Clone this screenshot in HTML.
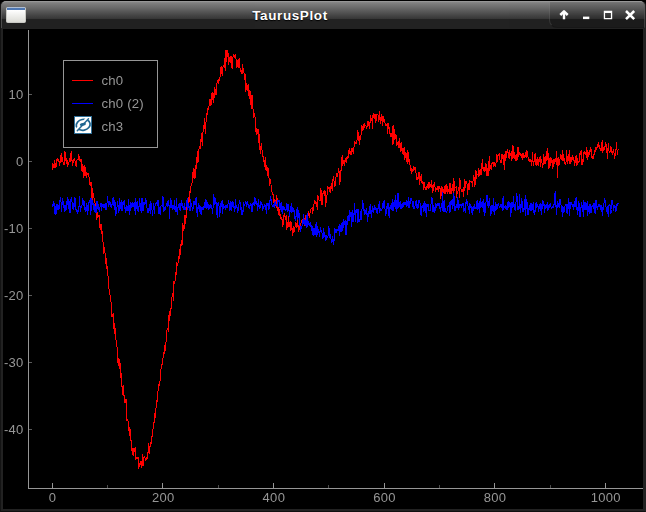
<!DOCTYPE html>
<html>
<head>
<meta charset="utf-8">
<title>TaurusPlot</title>
<style>
html,body{margin:0;padding:0;background:#000;}
body{width:646px;height:512px;overflow:hidden;position:relative;font-family:"Liberation Sans",sans-serif;}
#win{position:absolute;left:0;top:0;width:646px;height:512px;background:#000;}
#frame{position:absolute;left:0;top:0;width:644px;height:510px;border:1px solid #000;border-color:#000 #222 #101010 #141414;border-radius:6px 6px 0 0;background:#222;overflow:hidden;}
#tb{position:absolute;left:0;top:0;width:644px;height:28px;background:linear-gradient(to bottom,#8e8e8e 0px,#7b7b7b 3px,#353535 18px,#222 18.5px,#222 28px);}
#tbhl{position:absolute;left:0;top:0;width:642px;height:26px;border-top:1px solid #a0a0a0;border-left:1px solid #6a6a6a;border-right:1px solid #6a6a6a;border-radius:5px 5px 0 0;opacity:.6}
#content{position:absolute;left:2px;top:28px;width:640px;height:480px;background:#000;}
#title{position:absolute;left:0;top:7px;width:578px;text-align:center;color:#fff;font-weight:bold;font-size:13.5px;letter-spacing:0.6px;line-height:16px;text-shadow:0 1px 1px #000;}
#btns{position:absolute;left:548px;top:1px;width:96px;height:25px;border-left:1px solid rgba(255,255,255,.12);border-bottom:1px solid rgba(0,0,0,.2);border-radius:0 0 0 8px;background:linear-gradient(to bottom,rgba(0,0,0,.12),rgba(0,0,0,.18));}
svg{position:absolute;left:0;top:0;}
.t{font-family:"Liberation Sans",sans-serif;font-size:13px;fill:#969696;}
.lg{font-size:13.2px;letter-spacing:0.2px;}
.tk{letter-spacing:0.3px;}
svg{will-change:transform;}
</style>
</head>
<body>
<div id="win">
 <div id="frame">
  <div id="tb"></div>
  <div id="tbhl"></div>
  <div id="btns"></div>
  <div id="title">TaurusPlot</div>
  <div id="content"></div>
 </div>
 <svg width="646" height="512" viewBox="0 0 646 512">
  <!-- window icon -->
  <g>
   <rect x="6.5" y="7.5" width="19" height="15" rx="1" fill="#f2f2ee" stroke="#c9c9c4"/>
   <rect x="7" y="10" width="18" height="12" fill="url(#ig)"/>
   <rect x="7" y="7.2" width="18" height="1" fill="#a9bbd6"/>
   <rect x="7" y="8" width="18" height="2" fill="#4f78b3"/>
  </g>
  <defs>
   <linearGradient id="ig" x1="0" y1="0" x2="0" y2="1"><stop offset="0" stop-color="#ffffff"/><stop offset="1" stop-color="#dcdcd6"/></linearGradient>
  </defs>
  <!-- title buttons -->
  <g fill="#fff" stroke="none">
   <path d="M560.3 15 L564 11.3 L567.7 15" fill="none" stroke="#fff" stroke-width="2.5" stroke-linejoin="round"/>
   <rect x="562.8" y="12.5" width="2.4" height="6.8"/>
   <rect x="583" y="16.6" width="6.3" height="2.5"/>
   <path d="M603.8 10.8 H612.2 V19.2 H603.8 Z M605.1 13 V17.9 H610.9 V13 Z" fill-rule="evenodd"/>
   <path d="M626 11 L634.2 19.2 M634.2 11 L626 19.2" fill="none" stroke="#fff" stroke-width="2.5"/>
  </g>
  <!-- axes -->
  <g shape-rendering="crispEdges" fill="#969696">
   <rect x="28" y="30" width="1" height="459"/>
   <rect x="28" y="488" width="615" height="1"/>
  </g>
  <!-- x ticks -->
  <g shape-rendering="crispEdges">
   <rect x="52" y="483" width="1" height="5" fill="#969696"/>
   <rect x="107" y="485" width="1" height="3" fill="#4b4b4b"/>
   <rect x="162" y="483" width="1" height="5" fill="#969696"/>
   <rect x="218" y="485" width="1" height="3" fill="#4b4b4b"/>
   <rect x="273" y="483" width="1" height="5" fill="#969696"/>
   <rect x="328" y="485" width="1" height="3" fill="#4b4b4b"/>
   <rect x="384" y="483" width="1" height="5" fill="#969696"/>
   <rect x="439" y="485" width="1" height="3" fill="#4b4b4b"/>
   <rect x="494" y="483" width="1" height="5" fill="#969696"/>
   <rect x="550" y="485" width="1" height="3" fill="#4b4b4b"/>
   <rect x="605" y="483" width="1" height="5" fill="#969696"/>
  </g>
  <g shape-rendering="crispEdges">
   <rect x="29" y="94" width="3" height="1" fill="#5a5a5a"/>
   <rect x="29" y="161" width="3" height="1" fill="#5a5a5a"/>
   <rect x="29" y="228" width="3" height="1" fill="#5a5a5a"/>
   <rect x="29" y="295" width="3" height="1" fill="#5a5a5a"/>
   <rect x="29" y="362" width="3" height="1" fill="#5a5a5a"/>
   <rect x="29" y="429" width="3" height="1" fill="#5a5a5a"/>
  </g>
  <g class="t tk" text-anchor="middle">
   <text x="52.6" y="502">0</text>
   <text x="163.3" y="502">200</text>
   <text x="273.9" y="502">400</text>
   <text x="384.5" y="502">600</text>
   <text x="495.1" y="502">800</text>
   <text x="605.8" y="502">1000</text>
  </g>
  <g class="t tk" text-anchor="end">
   <text x="23.6" y="98.7">10</text>
   <text x="23.6" y="165.7">0</text>
   <text x="23.6" y="232.7">-10</text>
   <text x="23.6" y="299.7">-20</text>
   <text x="23.6" y="366.7">-30</text>
   <text x="23.6" y="433.7">-40</text>
  </g>
  <!-- curves -->
  <path d="M52.3,170.2 L52.9,162.9 L53.4,167.6 L54.0,167.9 L54.5,160.4 L55.1,163.3 L55.6,168.4 L56.2,166.6 L56.7,159.8 L57.3,160.0 L57.8,157.7 L58.4,162.2 L58.9,159.3 L59.5,165.7 L60.0,163.2 L60.6,161.2 L61.1,153.5 L61.7,161.5 L62.3,156.8 L62.8,160.7 L63.4,164.6 L63.9,163.2 L64.5,165.3 L65.0,151.4 L65.6,160.8 L66.1,159.7 L66.7,157.8 L67.2,166.8 L67.8,160.3 L68.3,164.6 L68.9,162.4 L69.4,159.4 L70.0,160.6 L70.6,161.6 L71.1,151.3 L71.7,160.4 L72.2,160.2 L72.8,165.8 L73.3,159.0 L73.9,160.4 L74.4,159.0 L75.0,160.8 L75.5,163.6 L76.1,166.6 L76.6,162.5 L77.2,159.4 L77.7,159.8 L78.3,159.3 L78.8,153.9 L79.4,159.7 L80.0,160.8 L80.5,161.2 L81.1,158.9 L81.6,167.2 L82.2,172.4 L82.7,164.3 L83.3,167.9 L83.8,177.7 L84.4,172.0 L84.9,165.3 L85.5,176.1 L86.0,171.7 L86.6,177.6 L87.1,172.7 L87.7,174.6 L88.3,175.4 L88.8,173.4 L89.4,184.2 L89.9,183.4 L90.5,184.5 L91.0,181.8 L91.6,189.0 L92.1,200.9 L92.7,188.1 L93.2,195.7 L93.8,195.7 L94.3,201.6 L94.9,202.5 L95.4,206.1 L96.0,208.9 L96.5,219.5 L97.1,217.6 L97.7,212.0 L98.2,216.8 L98.8,216.5 L99.3,215.8 L99.9,227.9 L100.4,228.7 L101.0,223.9 L101.5,233.1 L102.1,232.6 L102.6,230.9 L103.2,246.2 L103.7,252.5 L104.3,251.2 L104.8,247.3 L105.4,263.8 L106.0,257.3 L106.5,268.5 L107.1,267.1 L107.6,270.4 L108.2,277.9 L108.7,286.2 L109.3,291.3 L109.8,292.6 L110.4,300.3 L110.9,300.6 L111.5,306.8 L112.0,316.4 L112.6,316.5 L113.1,313.0 L113.7,318.6 L114.2,334.0 L114.8,323.2 L115.4,336.6 L115.9,338.5 L116.5,345.2 L117.0,347.0 L117.6,347.9 L118.1,366.1 L118.7,358.4 L119.2,359.5 L119.8,368.5 L120.3,362.7 L120.9,377.9 L121.4,373.1 L122.0,386.6 L122.5,394.9 L123.1,384.6 L123.6,392.8 L124.2,396.7 L124.8,402.6 L125.3,402.3 L125.9,398.9 L126.4,400.5 L127.0,421.1 L127.5,420.0 L128.1,420.8 L128.6,430.6 L129.2,429.3 L129.7,436.1 L130.3,428.6 L130.8,437.3 L131.4,446.2 L131.9,451.3 L132.5,447.9 L133.1,456.2 L133.6,448.3 L134.2,451.5 L134.7,448.9 L135.3,448.3 L135.8,460.1 L136.4,457.2 L136.9,457.8 L137.5,458.1 L138.0,457.2 L138.6,469.3 L139.1,464.2 L139.7,466.5 L140.2,461.0 L140.8,462.6 L141.3,467.9 L141.9,462.6 L142.5,453.8 L143.0,466.0 L143.6,460.3 L144.1,456.6 L144.7,456.8 L145.2,458.7 L145.8,460.5 L146.3,457.1 L146.9,460.4 L147.4,452.7 L148.0,453.7 L148.5,443.5 L149.1,453.3 L149.6,452.5 L150.2,443.9 L150.8,441.8 L151.3,444.1 L151.9,437.9 L152.4,432.2 L153.0,429.3 L153.5,427.4 L154.1,421.6 L154.6,412.6 L155.2,417.2 L155.7,416.7 L156.3,400.3 L156.8,406.3 L157.4,394.5 L157.9,391.4 L158.5,388.9 L159.0,384.4 L159.6,385.9 L160.2,378.3 L160.7,373.9 L161.3,364.0 L161.8,366.0 L162.4,362.3 L162.9,360.0 L163.5,351.8 L164.0,353.8 L164.6,344.8 L165.1,350.6 L165.7,349.9 L166.2,337.1 L166.8,331.0 L167.3,329.0 L167.9,328.1 L168.5,331.9 L169.0,315.3 L169.6,321.2 L170.1,308.3 L170.7,315.5 L171.2,305.6 L171.8,298.9 L172.3,294.0 L172.9,293.2 L173.4,300.6 L174.0,281.2 L174.5,282.5 L175.1,280.9 L175.6,272.3 L176.2,274.9 L176.7,261.9 L177.3,265.5 L177.9,265.2 L178.4,255.8 L179.0,257.6 L179.5,259.4 L180.1,246.6 L180.6,255.1 L181.2,240.0 L181.7,245.1 L182.3,244.5 L182.8,222.6 L183.4,230.1 L183.9,230.9 L184.5,219.8 L185.0,215.1 L185.6,223.9 L186.2,216.0 L186.7,212.0 L187.3,198.2 L187.8,203.2 L188.4,197.0 L188.9,203.0 L189.5,198.8 L190.0,191.0 L190.6,191.9 L191.1,185.1 L191.7,184.9 L192.2,182.2 L192.8,171.9 L193.3,178.0 L193.9,168.3 L194.4,171.1 L195.0,178.5 L195.6,166.2 L196.1,167.2 L196.7,157.1 L197.2,162.7 L197.8,150.7 L198.3,161.8 L198.9,149.5 L199.4,145.7 L200.0,149.0 L200.5,146.2 L201.1,137.4 L201.6,132.6 L202.2,146.2 L202.7,135.6 L203.3,128.3 L203.8,128.9 L204.4,117.8 L205.0,128.6 L205.5,133.6 L206.1,119.6 L206.6,113.3 L207.2,115.2 L207.7,109.8 L208.3,106.6 L208.8,110.0 L209.4,99.2 L209.9,101.7 L210.5,100.5 L211.0,105.5 L211.6,94.2 L212.1,93.5 L212.7,100.2 L213.3,93.3 L213.8,103.3 L214.4,87.2 L214.9,87.6 L215.5,94.7 L216.0,94.8 L216.6,89.4 L217.1,81.1 L217.7,82.2 L218.2,78.6 L218.8,83.9 L219.3,77.5 L219.9,79.5 L220.4,67.2 L221.0,74.3 L221.5,66.3 L222.1,75.8 L222.7,68.8 L223.2,65.4 L223.8,66.2 L224.3,68.3 L224.9,57.7 L225.4,71.0 L226.0,49.7 L226.5,61.8 L227.1,55.5 L227.6,49.7 L228.2,54.7 L228.7,65.3 L229.3,58.2 L229.8,57.1 L230.4,63.0 L231.0,55.8 L231.5,62.3 L232.1,69.1 L232.6,64.5 L233.2,53.6 L233.7,57.4 L234.3,55.1 L234.8,58.4 L235.4,54.0 L235.9,57.1 L236.5,68.4 L237.0,66.8 L237.6,61.6 L238.1,59.5 L238.7,67.9 L239.2,58.4 L239.8,67.2 L240.4,68.8 L240.9,71.5 L241.5,70.7 L242.0,74.3 L242.6,64.3 L243.1,72.3 L243.7,67.7 L244.2,76.2 L244.8,79.9 L245.3,74.0 L245.9,91.9 L246.4,83.2 L247.0,86.9 L247.5,90.6 L248.1,83.6 L248.7,91.1 L249.2,99.2 L249.8,89.8 L250.3,91.9 L250.9,104.5 L251.4,108.6 L252.0,95.1 L252.5,107.9 L253.1,109.4 L253.6,117.7 L254.2,114.7 L254.7,113.3 L255.3,120.1 L255.8,131.9 L256.4,128.0 L256.9,135.2 L257.5,131.2 L258.1,128.6 L258.6,143.1 L259.2,134.2 L259.7,145.1 L260.3,153.5 L260.8,146.2 L261.4,144.7 L261.9,148.1 L262.5,156.1 L263.0,156.3 L263.6,160.4 L264.1,162.1 L264.7,166.6 L265.2,156.8 L265.8,168.7 L266.3,170.6 L266.9,165.2 L267.5,175.5 L268.0,172.6 L268.6,168.0 L269.1,179.8 L269.7,186.3 L270.2,179.8 L270.8,180.9 L271.3,189.2 L271.9,191.1 L272.4,194.5 L273.0,193.9 L273.5,194.1 L274.1,204.1 L274.6,198.9 L275.2,201.1 L275.8,205.6 L276.3,207.5 L276.9,194.9 L277.4,210.7 L278.0,206.7 L278.5,207.7 L279.1,216.2 L279.6,209.3 L280.2,219.3 L280.7,213.9 L281.3,220.2 L281.8,218.7 L282.4,221.1 L282.9,227.2 L283.5,215.4 L284.0,217.2 L284.6,213.4 L285.2,217.0 L285.7,219.8 L286.3,215.2 L286.8,228.0 L287.4,226.9 L287.9,223.6 L288.5,216.0 L289.0,226.6 L289.6,226.0 L290.1,221.1 L290.7,229.9 L291.2,229.7 L291.8,222.1 L292.3,236.4 L292.9,234.0 L293.5,227.1 L294.0,227.6 L294.6,232.4 L295.1,226.3 L295.7,221.7 L296.2,228.0 L296.8,225.7 L297.3,218.5 L297.9,225.5 L298.4,231.9 L299.0,225.3 L299.5,230.1 L300.1,226.7 L300.6,226.9 L301.2,220.7 L301.7,221.6 L302.3,220.3 L302.9,224.4 L303.4,223.5 L304.0,217.9 L304.5,225.6 L305.1,219.1 L305.6,215.1 L306.2,218.4 L306.7,220.5 L307.3,213.1 L307.8,215.9 L308.4,210.6 L308.9,215.4 L309.5,218.0 L310.0,212.8 L310.6,210.7 L311.2,208.7 L311.7,209.0 L312.3,207.4 L312.8,213.7 L313.4,206.8 L313.9,204.6 L314.5,199.7 L315.0,202.6 L315.6,201.8 L316.1,204.1 L316.7,203.0 L317.2,209.5 L317.8,195.1 L318.3,196.9 L318.9,199.7 L319.4,200.9 L320.0,201.0 L320.6,187.8 L321.1,191.1 L321.7,204.6 L322.2,204.2 L322.8,195.4 L323.3,190.9 L323.9,193.7 L324.4,196.4 L325.0,190.0 L325.5,207.1 L326.1,202.4 L326.6,197.9 L327.2,193.3 L327.7,185.9 L328.3,188.5 L328.9,188.2 L329.4,191.8 L330.0,186.8 L330.5,192.9 L331.1,185.1 L331.6,182.7 L332.2,191.4 L332.7,181.9 L333.3,176.2 L333.8,177.6 L334.4,186.7 L334.9,181.6 L335.5,185.7 L336.0,177.2 L336.6,173.5 L337.1,173.2 L337.7,177.1 L338.3,168.4 L338.8,169.6 L339.4,173.0 L339.9,184.6 L340.5,171.1 L341.0,170.3 L341.6,170.4 L342.1,154.8 L342.7,166.0 L343.2,162.7 L343.8,160.5 L344.3,165.5 L344.9,160.5 L345.4,160.9 L346.0,157.9 L346.5,163.0 L347.1,155.8 L347.7,158.2 L348.2,157.4 L348.8,150.5 L349.3,149.7 L349.9,153.2 L350.4,152.4 L351.0,155.4 L351.5,150.5 L352.1,148.2 L352.6,148.6 L353.2,153.6 L353.7,150.1 L354.3,143.6 L354.8,141.5 L355.4,144.3 L356.0,142.2 L356.5,142.9 L357.1,139.6 L357.6,130.4 L358.2,140.9 L358.7,132.1 L359.3,145.0 L359.8,136.2 L360.4,140.0 L360.9,137.9 L361.5,124.7 L362.0,128.8 L362.6,131.4 L363.1,124.4 L363.7,129.5 L364.2,126.5 L364.8,123.9 L365.4,125.9 L365.9,125.5 L366.5,127.7 L367.0,126.9 L367.6,123.4 L368.1,120.6 L368.7,124.7 L369.2,123.5 L369.8,128.6 L370.3,114.8 L370.9,122.1 L371.4,119.0 L372.0,120.1 L372.5,129.3 L373.1,112.7 L373.7,117.7 L374.2,114.2 L374.8,118.8 L375.3,113.8 L375.9,122.7 L376.4,115.3 L377.0,113.8 L377.5,114.3 L378.1,114.9 L378.6,121.7 L379.2,118.5 L379.7,110.8 L380.3,123.0 L380.8,122.0 L381.4,118.4 L381.9,114.2 L382.5,126.2 L383.1,115.8 L383.6,118.9 L384.2,123.0 L384.7,118.9 L385.3,126.2 L385.8,123.3 L386.4,126.3 L386.9,124.2 L387.5,134.4 L388.0,122.9 L388.6,129.4 L389.1,126.9 L389.7,128.6 L390.2,136.5 L390.8,133.3 L391.4,135.7 L391.9,134.2 L392.5,126.5 L393.0,144.5 L393.6,124.9 L394.1,130.0 L394.7,139.6 L395.2,138.5 L395.8,133.6 L396.3,136.9 L396.9,146.2 L397.4,142.1 L398.0,142.4 L398.5,147.6 L399.1,139.8 L399.6,138.3 L400.2,152.0 L400.8,143.7 L401.3,142.2 L401.9,149.9 L402.4,149.0 L403.0,154.3 L403.5,154.7 L404.1,147.5 L404.6,160.0 L405.2,151.8 L405.7,157.7 L406.3,152.6 L406.8,160.4 L407.4,163.8 L407.9,150.0 L408.5,162.1 L409.0,158.7 L409.6,161.9 L410.2,166.6 L410.7,167.6 L411.3,173.9 L411.8,169.0 L412.4,169.1 L412.9,171.9 L413.5,165.9 L414.0,169.6 L414.6,168.1 L415.1,167.6 L415.7,168.2 L416.2,175.9 L416.8,178.9 L417.3,177.9 L417.9,179.6 L418.5,175.6 L419.0,171.7 L419.6,185.2 L420.1,176.5 L420.7,181.3 L421.2,174.5 L421.8,182.7 L422.3,183.3 L422.9,181.3 L423.4,190.2 L424.0,181.9 L424.5,187.1 L425.1,187.1 L425.6,189.6 L426.2,185.6 L426.7,188.4 L427.3,187.3 L427.9,184.5 L428.4,189.2 L429.0,182.2 L429.5,187.8 L430.1,183.7 L430.6,185.7 L431.2,187.8 L431.7,180.1 L432.3,192.8 L432.8,184.8 L433.4,190.6 L433.9,184.5 L434.5,183.4 L435.0,187.3 L435.6,192.0 L436.2,189.6 L436.7,189.8 L437.3,185.9 L437.8,187.9 L438.4,192.3 L438.9,186.5 L439.5,186.3 L440.0,188.9 L440.6,198.5 L441.1,186.5 L441.7,195.2 L442.2,194.9 L442.8,189.1 L443.3,190.1 L443.9,192.5 L444.4,185.7 L445.0,194.2 L445.6,188.7 L446.1,184.5 L446.7,191.9 L447.2,186.5 L447.8,193.6 L448.3,189.1 L448.9,189.6 L449.4,193.8 L450.0,182.9 L450.5,193.8 L451.1,193.9 L451.6,188.2 L452.2,190.7 L452.7,184.1 L453.3,194.0 L453.9,178.2 L454.4,191.1 L455.0,187.2 L455.5,187.7 L456.1,187.3 L456.6,197.5 L457.2,191.9 L457.7,193.9 L458.3,188.5 L458.8,187.3 L459.4,197.8 L459.9,178.3 L460.5,186.0 L461.0,189.0 L461.6,191.8 L462.1,191.5 L462.7,189.5 L463.3,188.3 L463.8,196.8 L464.4,180.3 L464.9,179.7 L465.5,187.6 L466.0,183.5 L466.6,181.4 L467.1,185.0 L467.7,195.4 L468.2,182.7 L468.8,190.0 L469.3,188.8 L469.9,180.3 L470.4,181.7 L471.0,181.2 L471.5,182.4 L472.1,183.2 L472.7,187.4 L473.2,177.0 L473.8,175.9 L474.3,179.4 L474.9,186.5 L475.4,178.0 L476.0,170.4 L476.5,178.7 L477.1,174.3 L477.6,174.2 L478.2,175.2 L478.7,167.8 L479.3,171.2 L479.8,175.8 L480.4,169.5 L481.0,175.4 L481.5,163.5 L482.1,169.3 L482.6,159.4 L483.2,169.7 L483.7,171.3 L484.3,167.5 L484.8,172.0 L485.4,169.3 L485.9,163.3 L486.5,169.4 L487.0,176.4 L487.6,168.2 L488.1,176.2 L488.7,169.3 L489.2,155.8 L489.8,170.8 L490.4,165.5 L490.9,167.7 L491.5,168.6 L492.0,163.5 L492.6,163.3 L493.1,161.7 L493.7,166.8 L494.2,161.6 L494.8,165.3 L495.3,166.6 L495.9,165.1 L496.4,153.9 L497.0,162.4 L497.5,155.4 L498.1,155.8 L498.7,154.9 L499.2,153.1 L499.8,157.4 L500.3,163.1 L500.9,160.7 L501.4,163.0 L502.0,154.2 L502.5,154.6 L503.1,159.8 L503.6,154.6 L504.2,169.8 L504.7,156.3 L505.3,151.3 L505.8,160.8 L506.4,153.6 L506.9,151.6 L507.5,149.0 L508.1,153.1 L508.6,157.3 L509.2,158.7 L509.7,150.1 L510.3,155.0 L510.8,155.4 L511.4,150.7 L511.9,160.6 L512.5,150.7 L513.0,145.2 L513.6,158.1 L514.1,152.5 L514.7,156.1 L515.2,161.2 L515.8,155.3 L516.4,155.0 L516.9,160.5 L517.5,157.2 L518.0,147.0 L518.6,157.4 L519.1,154.9 L519.7,153.0 L520.2,153.5 L520.8,156.1 L521.3,154.2 L521.9,157.7 L522.4,160.4 L523.0,152.8 L523.5,158.3 L524.1,155.5 L524.6,158.3 L525.2,155.7 L525.8,152.4 L526.3,158.1 L526.9,149.6 L527.4,156.8 L528.0,156.8 L528.5,161.4 L529.1,158.9 L529.6,160.7 L530.2,158.8 L530.7,161.5 L531.3,160.9 L531.8,166.1 L532.4,152.4 L532.9,160.8 L533.5,165.6 L534.1,160.6 L534.6,153.6 L535.2,165.4 L535.7,153.0 L536.3,164.7 L536.8,165.3 L537.4,157.3 L537.9,164.3 L538.5,166.3 L539.0,158.6 L539.6,162.0 L540.1,156.3 L540.7,167.4 L541.2,158.9 L541.8,160.8 L542.3,165.9 L542.9,167.6 L543.5,154.0 L544.0,163.4 L544.6,163.6 L545.1,156.3 L545.7,164.2 L546.2,159.1 L546.8,150.7 L547.3,160.4 L547.9,148.3 L548.4,166.9 L549.0,168.5 L549.5,160.0 L550.1,157.2 L550.6,166.0 L551.2,161.7 L551.7,158.3 L552.3,162.5 L552.9,168.7 L553.4,161.6 L554.0,159.1 L554.5,164.3 L555.1,159.3 L555.6,158.5 L556.2,163.4 L556.7,151.5 L557.3,177.8 L557.8,159.0 L558.4,156.9 L558.9,165.5 L559.5,163.4 L560.0,159.5 L560.6,155.4 L561.2,156.5 L561.7,159.9 L562.3,150.3 L562.8,161.3 L563.4,154.3 L563.9,160.5 L564.5,158.4 L565.0,164.1 L565.6,164.5 L566.1,161.0 L566.7,149.7 L567.2,158.6 L567.8,164.2 L568.3,154.4 L568.9,161.3 L569.4,150.1 L570.0,163.7 L570.6,157.2 L571.1,160.5 L571.7,162.2 L572.2,154.8 L572.8,160.4 L573.3,158.1 L573.9,159.9 L574.4,165.5 L575.0,159.8 L575.5,163.4 L576.1,154.8 L576.6,165.8 L577.2,158.4 L577.7,165.2 L578.3,160.8 L578.9,163.1 L579.4,157.4 L580.0,152.8 L580.5,154.0 L581.1,150.2 L581.6,162.8 L582.2,165.4 L582.7,158.8 L583.3,162.2 L583.8,151.6 L584.4,154.0 L584.9,151.5 L585.5,153.9 L586.0,154.4 L586.6,147.3 L587.1,160.1 L587.7,152.0 L588.3,153.2 L588.8,157.3 L589.4,150.3 L589.9,153.3 L590.5,147.9 L591.0,148.4 L591.6,155.2 L592.1,159.1 L592.7,158.7 L593.2,153.8 L593.8,159.0 L594.3,150.3 L594.9,151.9 L595.4,151.2 L596.0,147.5 L596.6,149.2 L597.1,147.9 L597.7,145.7 L598.2,147.3 L598.8,141.8 L599.3,148.3 L599.9,147.7 L600.4,151.0 L601.0,149.3 L601.5,150.7 L602.1,140.2 L602.6,153.1 L603.2,149.6 L603.7,147.7 L604.3,146.9 L604.8,150.3 L605.4,142.2 L606.0,146.3 L606.5,144.4 L607.1,154.2 L607.6,159.2 L608.2,142.9 L608.7,150.4 L609.3,151.1 L609.8,152.1 L610.4,150.9 L610.9,146.0 L611.5,151.7 L612.0,152.9 L612.6,154.8 L613.1,149.9 L613.7,150.1 L614.2,155.2 L614.8,159.0 L615.4,150.3 L615.9,150.1 L616.5,142.4 L617.0,149.5 L617.6,155.2 L618.1,148.5" fill="none" stroke="#ff0000" stroke-width="1" shape-rendering="crispEdges"/>
  <path d="M52.3,204.1 L52.9,207.0 L53.4,200.8 L54.0,202.9 L54.5,207.1 L55.1,215.2 L55.6,206.0 L56.2,213.8 L56.7,203.9 L57.3,209.5 L57.8,205.1 L58.4,205.7 L58.9,209.5 L59.5,207.0 L60.0,200.0 L60.6,197.3 L61.1,202.6 L61.7,211.5 L62.3,199.3 L62.8,197.8 L63.4,205.4 L63.9,207.1 L64.5,212.0 L65.0,204.6 L65.6,210.7 L66.1,209.4 L66.7,207.9 L67.2,197.2 L67.8,202.4 L68.3,208.7 L68.9,199.5 L69.4,208.5 L70.0,212.7 L70.6,210.8 L71.1,197.0 L71.7,197.9 L72.2,204.0 L72.8,207.4 L73.3,210.2 L73.9,204.1 L74.4,197.1 L75.0,207.2 L75.5,198.0 L76.1,211.9 L76.6,209.2 L77.2,212.1 L77.7,214.2 L78.3,206.1 L78.8,212.2 L79.4,195.8 L80.0,207.2 L80.5,211.8 L81.1,205.3 L81.6,208.2 L82.2,204.1 L82.7,198.2 L83.3,201.0 L83.8,205.7 L84.4,201.0 L84.9,208.2 L85.5,207.4 L86.0,211.7 L86.6,203.4 L87.1,205.0 L87.7,214.8 L88.3,207.8 L88.8,202.4 L89.4,202.2 L89.9,199.9 L90.5,215.4 L91.0,198.0 L91.6,210.7 L92.1,200.2 L92.7,204.8 L93.2,202.6 L93.8,207.9 L94.3,212.3 L94.9,204.3 L95.4,210.1 L96.0,213.1 L96.5,201.2 L97.1,208.6 L97.7,201.2 L98.2,205.8 L98.8,209.1 L99.3,210.5 L99.9,206.9 L100.4,206.4 L101.0,203.2 L101.5,210.7 L102.1,206.6 L102.6,205.2 L103.2,207.5 L103.7,204.0 L104.3,208.3 L104.8,204.4 L105.4,204.0 L106.0,209.4 L106.5,209.6 L107.1,202.0 L107.6,196.4 L108.2,202.5 L108.7,205.5 L109.3,204.2 L109.8,201.6 L110.4,204.2 L110.9,207.1 L111.5,207.4 L112.0,203.7 L112.6,204.4 L113.1,196.9 L113.7,199.2 L114.2,210.2 L114.8,199.9 L115.4,207.1 L115.9,215.7 L116.5,209.1 L117.0,206.9 L117.6,200.9 L118.1,205.7 L118.7,212.9 L119.2,210.5 L119.8,198.2 L120.3,208.3 L120.9,209.0 L121.4,199.9 L122.0,211.0 L122.5,204.1 L123.1,201.1 L123.6,204.9 L124.2,199.8 L124.8,209.1 L125.3,207.1 L125.9,212.5 L126.4,205.1 L127.0,208.9 L127.5,207.7 L128.1,210.9 L128.6,199.0 L129.2,207.1 L129.7,215.4 L130.3,207.1 L130.8,202.0 L131.4,203.7 L131.9,207.8 L132.5,202.4 L133.1,203.3 L133.6,206.7 L134.2,202.2 L134.7,207.0 L135.3,214.7 L135.8,198.4 L136.4,208.6 L136.9,208.1 L137.5,201.5 L138.0,210.6 L138.6,211.1 L139.1,205.5 L139.7,198.0 L140.2,205.3 L140.8,209.5 L141.3,213.0 L141.9,198.4 L142.5,198.6 L143.0,210.9 L143.6,201.7 L144.1,205.2 L144.7,202.1 L145.2,204.3 L145.8,199.7 L146.3,200.6 L146.9,208.1 L147.4,209.0 L148.0,213.4 L148.5,210.2 L149.1,207.4 L149.6,204.2 L150.2,213.9 L150.8,201.5 L151.3,205.3 L151.9,208.5 L152.4,215.8 L153.0,210.1 L153.5,202.6 L154.1,206.2 L154.6,213.7 L155.2,203.2 L155.7,204.8 L156.3,202.6 L156.8,203.2 L157.4,206.0 L157.9,200.7 L158.5,200.2 L159.0,213.9 L159.6,206.9 L160.2,215.2 L160.7,206.8 L161.3,205.2 L161.8,205.9 L162.4,206.3 L162.9,196.1 L163.5,199.9 L164.0,211.5 L164.6,207.7 L165.1,207.8 L165.7,209.1 L166.2,204.2 L166.8,203.9 L167.3,201.2 L167.9,207.3 L168.5,200.5 L169.0,204.4 L169.6,218.8 L170.1,205.3 L170.7,197.6 L171.2,201.7 L171.8,208.3 L172.3,204.7 L172.9,209.7 L173.4,205.3 L174.0,208.4 L174.5,199.6 L175.1,211.9 L175.6,205.9 L176.2,211.8 L176.7,197.9 L177.3,214.8 L177.9,207.9 L178.4,207.3 L179.0,204.4 L179.5,203.0 L180.1,210.7 L180.6,209.1 L181.2,200.4 L181.7,206.2 L182.3,203.1 L182.8,208.3 L183.4,205.9 L183.9,210.3 L184.5,202.8 L185.0,210.0 L185.6,208.7 L186.2,206.0 L186.7,201.9 L187.3,198.2 L187.8,210.1 L188.4,203.0 L188.9,206.0 L189.5,207.0 L190.0,211.2 L190.6,199.3 L191.1,207.1 L191.7,203.1 L192.2,208.8 L192.8,210.5 L193.3,206.8 L193.9,201.1 L194.4,202.3 L195.0,205.3 L195.6,201.8 L196.1,196.9 L196.7,207.0 L197.2,216.8 L197.8,207.0 L198.3,209.3 L198.9,203.3 L199.4,211.9 L200.0,206.1 L200.5,209.3 L201.1,214.8 L201.6,207.8 L202.2,207.6 L202.7,209.5 L203.3,209.4 L203.8,207.6 L204.4,202.2 L205.0,208.2 L205.5,198.6 L206.1,208.8 L206.6,199.7 L207.2,203.4 L207.7,206.1 L208.3,209.8 L208.8,204.3 L209.4,208.8 L209.9,205.6 L210.5,204.9 L211.0,207.7 L211.6,205.5 L212.1,209.2 L212.7,214.3 L213.3,201.3 L213.8,194.2 L214.4,204.7 L214.9,196.8 L215.5,203.2 L216.0,203.1 L216.6,202.3 L217.1,217.6 L217.7,205.6 L218.2,202.2 L218.8,205.1 L219.3,206.4 L219.9,216.7 L220.4,202.6 L221.0,207.6 L221.5,202.5 L222.1,200.3 L222.7,214.4 L223.2,204.5 L223.8,208.7 L224.3,206.5 L224.9,206.5 L225.4,209.6 L226.0,204.6 L226.5,207.0 L227.1,207.5 L227.6,207.8 L228.2,202.5 L228.7,199.8 L229.3,206.1 L229.8,211.4 L230.4,207.8 L231.0,201.5 L231.5,211.1 L232.1,206.7 L232.6,200.6 L233.2,208.1 L233.7,202.4 L234.3,212.1 L234.8,210.3 L235.4,198.8 L235.9,208.8 L236.5,204.8 L237.0,207.3 L237.6,211.4 L238.1,210.5 L238.7,207.1 L239.2,202.6 L239.8,200.3 L240.4,204.1 L240.9,210.1 L241.5,206.7 L242.0,214.6 L242.6,211.0 L243.1,212.1 L243.7,202.5 L244.2,205.6 L244.8,205.1 L245.3,203.0 L245.9,201.0 L246.4,206.8 L247.0,204.6 L247.5,201.0 L248.1,204.8 L248.7,205.4 L249.2,209.2 L249.8,205.0 L250.3,205.0 L250.9,203.8 L251.4,206.9 L252.0,211.9 L252.5,209.4 L253.1,202.0 L253.6,202.6 L254.2,205.7 L254.7,197.9 L255.3,198.4 L255.8,202.7 L256.4,204.9 L256.9,201.5 L257.5,211.2 L258.1,205.7 L258.6,199.2 L259.2,209.1 L259.7,204.6 L260.3,207.9 L260.8,201.3 L261.4,204.2 L261.9,202.7 L262.5,210.9 L263.0,205.7 L263.6,209.1 L264.1,206.6 L264.7,204.6 L265.2,205.0 L265.8,207.0 L266.3,214.4 L266.9,203.2 L267.5,205.7 L268.0,202.7 L268.6,208.9 L269.1,208.3 L269.7,200.5 L270.2,200.2 L270.8,196.4 L271.3,202.5 L271.9,204.7 L272.4,206.2 L273.0,206.6 L273.5,203.6 L274.1,208.1 L274.6,203.5 L275.2,202.0 L275.8,204.2 L276.3,204.3 L276.9,205.2 L277.4,206.9 L278.0,199.6 L278.5,201.3 L279.1,200.7 L279.6,208.2 L280.2,203.0 L280.7,208.9 L281.3,211.6 L281.8,202.3 L282.4,213.8 L282.9,210.5 L283.5,207.8 L284.0,206.6 L284.6,208.1 L285.2,210.5 L285.7,209.1 L286.3,209.3 L286.8,202.9 L287.4,204.9 L287.9,211.9 L288.5,204.4 L289.0,210.7 L289.6,216.9 L290.1,209.0 L290.7,211.6 L291.2,202.7 L291.8,212.6 L292.3,211.4 L292.9,207.3 L293.5,211.0 L294.0,210.1 L294.6,219.3 L295.1,216.3 L295.7,221.1 L296.2,214.1 L296.8,210.4 L297.3,206.6 L297.9,220.0 L298.4,209.8 L299.0,213.0 L299.5,214.0 L300.1,227.8 L300.6,231.9 L301.2,227.9 L301.7,226.9 L302.3,225.0 L302.9,222.2 L303.4,214.0 L304.0,223.6 L304.5,219.0 L305.1,225.7 L305.6,219.7 L306.2,227.8 L306.7,217.1 L307.3,213.1 L307.8,227.2 L308.4,221.9 L308.9,222.9 L309.5,225.0 L310.0,225.4 L310.6,222.2 L311.2,229.2 L311.7,225.4 L312.3,235.2 L312.8,226.1 L313.4,231.2 L313.9,236.4 L314.5,227.6 L315.0,235.0 L315.6,232.0 L316.1,222.3 L316.7,236.7 L317.2,233.5 L317.8,225.8 L318.3,232.8 L318.9,231.1 L319.4,237.3 L320.0,231.0 L320.6,226.8 L321.1,232.9 L321.7,230.0 L322.2,235.1 L322.8,239.4 L323.3,227.7 L323.9,237.8 L324.4,233.4 L325.0,234.6 L325.5,241.4 L326.1,234.6 L326.6,239.6 L327.2,236.2 L327.7,237.6 L328.3,233.9 L328.9,226.4 L329.4,232.4 L330.0,237.7 L330.5,234.5 L331.1,239.6 L331.6,242.5 L332.2,242.0 L332.7,236.1 L333.3,244.5 L333.8,238.7 L334.4,240.8 L334.9,228.5 L335.5,230.5 L336.0,233.1 L336.6,229.7 L337.1,229.7 L337.7,230.7 L338.3,230.1 L338.8,225.6 L339.4,236.4 L339.9,225.4 L340.5,226.3 L341.0,232.4 L341.6,223.6 L342.1,223.0 L342.7,230.6 L343.2,227.1 L343.8,219.0 L344.3,224.6 L344.9,224.7 L345.4,220.4 L346.0,235.3 L346.5,221.2 L347.1,224.9 L347.7,215.9 L348.2,220.5 L348.8,215.5 L349.3,220.6 L349.9,210.1 L350.4,217.4 L351.0,212.5 L351.5,226.7 L352.1,210.0 L352.6,220.7 L353.2,222.2 L353.7,213.5 L354.3,215.3 L354.8,203.5 L355.4,222.1 L356.0,212.5 L356.5,211.7 L357.1,208.6 L357.6,223.2 L358.2,208.6 L358.7,222.2 L359.3,219.0 L359.8,222.3 L360.4,214.3 L360.9,210.8 L361.5,219.9 L362.0,209.1 L362.6,199.6 L363.1,210.9 L363.7,203.4 L364.2,212.3 L364.8,214.3 L365.4,213.0 L365.9,210.2 L366.5,207.8 L367.0,215.0 L367.6,221.5 L368.1,210.7 L368.7,217.4 L369.2,211.4 L369.8,206.5 L370.3,205.5 L370.9,213.0 L371.4,218.3 L372.0,210.0 L372.5,205.9 L373.1,212.6 L373.7,207.8 L374.2,209.4 L374.8,206.5 L375.3,208.1 L375.9,208.8 L376.4,213.4 L377.0,208.0 L377.5,213.8 L378.1,207.6 L378.6,208.5 L379.2,201.5 L379.7,211.8 L380.3,210.9 L380.8,209.2 L381.4,210.7 L381.9,210.5 L382.5,202.8 L383.1,208.3 L383.6,202.8 L384.2,200.6 L384.7,201.5 L385.3,216.3 L385.8,209.2 L386.4,213.5 L386.9,205.8 L387.5,209.2 L388.0,202.9 L388.6,205.9 L389.1,217.8 L389.7,207.1 L390.2,208.8 L390.8,206.8 L391.4,202.7 L391.9,210.0 L392.5,198.8 L393.0,210.7 L393.6,209.3 L394.1,200.3 L394.7,202.1 L395.2,209.2 L395.8,195.2 L396.3,206.6 L396.9,211.7 L397.4,199.9 L398.0,192.7 L398.5,207.6 L399.1,202.6 L399.6,202.6 L400.2,209.1 L400.8,201.0 L401.3,207.2 L401.9,208.8 L402.4,203.3 L403.0,206.8 L403.5,203.9 L404.1,202.2 L404.6,204.9 L405.2,204.7 L405.7,202.1 L406.3,207.0 L406.8,200.8 L407.4,201.3 L407.9,205.9 L408.5,197.5 L409.0,208.4 L409.6,202.0 L410.2,202.8 L410.7,197.7 L411.3,200.2 L411.8,198.0 L412.4,206.7 L412.9,204.1 L413.5,201.2 L414.0,208.7 L414.6,208.6 L415.1,205.7 L415.7,200.6 L416.2,207.7 L416.8,200.3 L417.3,209.4 L417.9,205.3 L418.5,207.9 L419.0,199.6 L419.6,201.1 L420.1,203.3 L420.7,213.2 L421.2,215.5 L421.8,207.1 L422.3,207.4 L422.9,205.0 L423.4,203.0 L424.0,211.8 L424.5,201.6 L425.1,203.2 L425.6,206.2 L426.2,216.6 L426.7,204.2 L427.3,205.8 L427.9,204.0 L428.4,204.7 L429.0,210.4 L429.5,210.8 L430.1,210.5 L430.6,207.0 L431.2,202.2 L431.7,198.0 L432.3,198.7 L432.8,211.7 L433.4,211.4 L433.9,205.5 L434.5,212.0 L435.0,211.2 L435.6,203.0 L436.2,207.7 L436.7,203.9 L437.3,206.4 L437.8,203.4 L438.4,206.3 L438.9,202.8 L439.5,205.4 L440.0,208.6 L440.6,211.5 L441.1,206.6 L441.7,202.8 L442.2,210.5 L442.8,191.9 L443.3,212.1 L443.9,210.5 L444.4,200.3 L445.0,212.3 L445.6,208.1 L446.1,211.2 L446.7,212.4 L447.2,210.6 L447.8,207.1 L448.3,205.8 L448.9,205.8 L449.4,202.5 L450.0,212.5 L450.5,203.0 L451.1,200.5 L451.6,204.5 L452.2,198.6 L452.7,209.1 L453.3,203.1 L453.9,193.5 L454.4,204.4 L455.0,211.3 L455.5,206.2 L456.1,208.0 L456.6,203.7 L457.2,208.3 L457.7,196.9 L458.3,203.3 L458.8,208.5 L459.4,207.8 L459.9,205.0 L460.5,205.7 L461.0,204.6 L461.6,207.5 L462.1,203.0 L462.7,205.6 L463.3,203.2 L463.8,211.9 L464.4,209.3 L464.9,208.3 L465.5,212.9 L466.0,202.6 L466.6,199.5 L467.1,204.4 L467.7,200.9 L468.2,209.1 L468.8,206.0 L469.3,214.2 L469.9,202.9 L470.4,207.5 L471.0,205.6 L471.5,213.1 L472.1,207.5 L472.7,214.7 L473.2,208.3 L473.8,206.5 L474.3,204.5 L474.9,208.3 L475.4,207.7 L476.0,209.1 L476.5,208.0 L477.1,199.6 L477.6,209.2 L478.2,208.4 L478.7,203.3 L479.3,202.2 L479.8,213.4 L480.4,197.9 L481.0,205.0 L481.5,206.1 L482.1,201.5 L482.6,207.8 L483.2,199.5 L483.7,207.7 L484.3,216.3 L484.8,202.9 L485.4,212.7 L485.9,202.6 L486.5,198.8 L487.0,194.6 L487.6,206.3 L488.1,201.7 L488.7,207.6 L489.2,198.1 L489.8,202.6 L490.4,212.2 L490.9,215.6 L491.5,205.1 L492.0,205.0 L492.6,209.7 L493.1,210.6 L493.7,198.0 L494.2,209.8 L494.8,215.3 L495.3,204.3 L495.9,202.3 L496.4,209.4 L497.0,208.4 L497.5,208.2 L498.1,203.8 L498.7,203.2 L499.2,207.8 L499.8,207.0 L500.3,206.6 L500.9,203.7 L501.4,205.6 L502.0,208.3 L502.5,210.7 L503.1,195.8 L503.6,210.4 L504.2,206.6 L504.7,206.5 L505.3,207.6 L505.8,205.3 L506.4,207.5 L506.9,209.5 L507.5,208.9 L508.1,201.2 L508.6,208.2 L509.2,206.2 L509.7,202.2 L510.3,204.2 L510.8,216.5 L511.4,206.0 L511.9,201.8 L512.5,205.2 L513.0,207.6 L513.6,195.9 L514.1,205.5 L514.7,207.1 L515.2,211.2 L515.8,206.6 L516.4,193.8 L516.9,193.7 L517.5,206.2 L518.0,210.3 L518.6,205.7 L519.1,208.9 L519.7,194.1 L520.2,209.3 L520.8,212.6 L521.3,201.6 L521.9,197.9 L522.4,211.6 L523.0,207.7 L523.5,212.1 L524.1,209.4 L524.6,209.6 L525.2,195.1 L525.8,215.9 L526.3,199.2 L526.9,202.1 L527.4,202.3 L528.0,215.3 L528.5,207.9 L529.1,210.0 L529.6,208.0 L530.2,203.4 L530.7,210.1 L531.3,210.2 L531.8,202.6 L532.4,206.3 L532.9,210.0 L533.5,202.4 L534.1,215.4 L534.6,209.6 L535.2,212.1 L535.7,204.3 L536.3,202.2 L536.8,208.3 L537.4,204.1 L537.9,204.3 L538.5,211.9 L539.0,207.2 L539.6,208.7 L540.1,203.2 L540.7,204.9 L541.2,214.5 L541.8,204.2 L542.3,208.5 L542.9,200.4 L543.5,205.5 L544.0,204.2 L544.6,213.3 L545.1,204.6 L545.7,209.4 L546.2,206.9 L546.8,206.0 L547.3,202.4 L547.9,210.9 L548.4,205.0 L549.0,207.7 L549.5,204.9 L550.1,205.7 L550.6,202.6 L551.2,208.9 L551.7,208.5 L552.3,207.5 L552.9,206.8 L553.4,207.0 L554.0,203.6 L554.5,205.2 L555.1,191.5 L555.6,206.9 L556.2,205.3 L556.7,214.6 L557.3,200.8 L557.8,205.1 L558.4,204.1 L558.9,206.5 L559.5,208.3 L560.0,199.2 L560.6,199.8 L561.2,207.4 L561.7,206.0 L562.3,216.7 L562.8,206.5 L563.4,208.1 L563.9,213.2 L564.5,206.4 L565.0,205.7 L565.6,205.4 L566.1,204.1 L566.7,212.6 L567.2,213.9 L567.8,207.7 L568.3,198.3 L568.9,206.2 L569.4,215.6 L570.0,201.9 L570.6,209.3 L571.1,201.8 L571.7,204.2 L572.2,205.8 L572.8,204.2 L573.3,209.6 L573.9,205.0 L574.4,201.5 L575.0,207.2 L575.5,205.9 L576.1,196.8 L576.6,209.0 L577.2,208.4 L577.7,214.9 L578.3,206.8 L578.9,201.3 L579.4,210.4 L580.0,217.1 L580.5,212.2 L581.1,206.7 L581.6,204.3 L582.2,206.2 L582.7,205.8 L583.3,216.7 L583.8,199.6 L584.4,209.9 L584.9,201.8 L585.5,204.6 L586.0,209.4 L586.6,209.2 L587.1,201.4 L587.7,215.6 L588.3,208.0 L588.8,205.7 L589.4,213.6 L589.9,203.7 L590.5,206.6 L591.0,212.5 L591.6,211.6 L592.1,204.7 L592.7,206.2 L593.2,207.4 L593.8,203.5 L594.3,203.8 L594.9,212.2 L595.4,212.8 L596.0,199.9 L596.6,206.8 L597.1,208.1 L597.7,210.3 L598.2,203.8 L598.8,207.2 L599.3,204.0 L599.9,206.1 L600.4,209.5 L601.0,204.6 L601.5,212.1 L602.1,206.6 L602.6,215.7 L603.2,208.0 L603.7,206.4 L604.3,199.1 L604.8,198.3 L605.4,202.7 L606.0,207.4 L606.5,211.8 L607.1,208.0 L607.6,206.4 L608.2,216.7 L608.7,206.6 L609.3,204.5 L609.8,204.8 L610.4,205.8 L610.9,213.5 L611.5,209.5 L612.0,200.3 L612.6,201.9 L613.1,205.7 L613.7,210.6 L614.2,205.7 L614.8,206.0 L615.4,207.0 L615.9,211.2 L616.5,210.2 L617.0,204.1 L617.6,205.1 L618.1,203.2" fill="none" stroke="#0000ff" stroke-width="1" shape-rendering="crispEdges"/>
  <!-- legend -->
  <rect x="63.5" y="60.5" width="94" height="87" fill="#000" fill-opacity="0.2" stroke="#969696" stroke-width="1" shape-rendering="crispEdges"/>
  <rect x="72" y="80" width="21" height="1" fill="#ff0000" shape-rendering="crispEdges"/>
  <rect x="72" y="103" width="21" height="1" fill="#0000ff" shape-rendering="crispEdges"/>
  <g>
   <rect x="74.5" y="116.5" width="17" height="17" fill="#fff" stroke="#2f7099"/>
   <ellipse cx="83.2" cy="124.8" rx="7.0" ry="5.4" fill="none" stroke="#1f6590" stroke-width="1.7" transform="rotate(-12 83.2 124.8)"/>
   <path d="M76.2 130 L87.6 117.9" stroke="#fff" stroke-width="2.6"/>
   <path d="M77.3 130.7 L88.5 118.8" stroke="#256a94" stroke-width="1.5" stroke-linecap="round"/>
   <ellipse cx="82.9" cy="124.4" rx="3.1" ry="1.45" fill="#1f6590" transform="rotate(-10 82.9 124.4)"/>
  </g>
  <g class="t lg">
   <text x="101.5" y="85">ch0</text>
   <text x="101.5" y="108">ch0 (2)</text>
   <text x="101.5" y="131">ch3</text>
  </g>
 </svg>
</div>
</body>
</html>
